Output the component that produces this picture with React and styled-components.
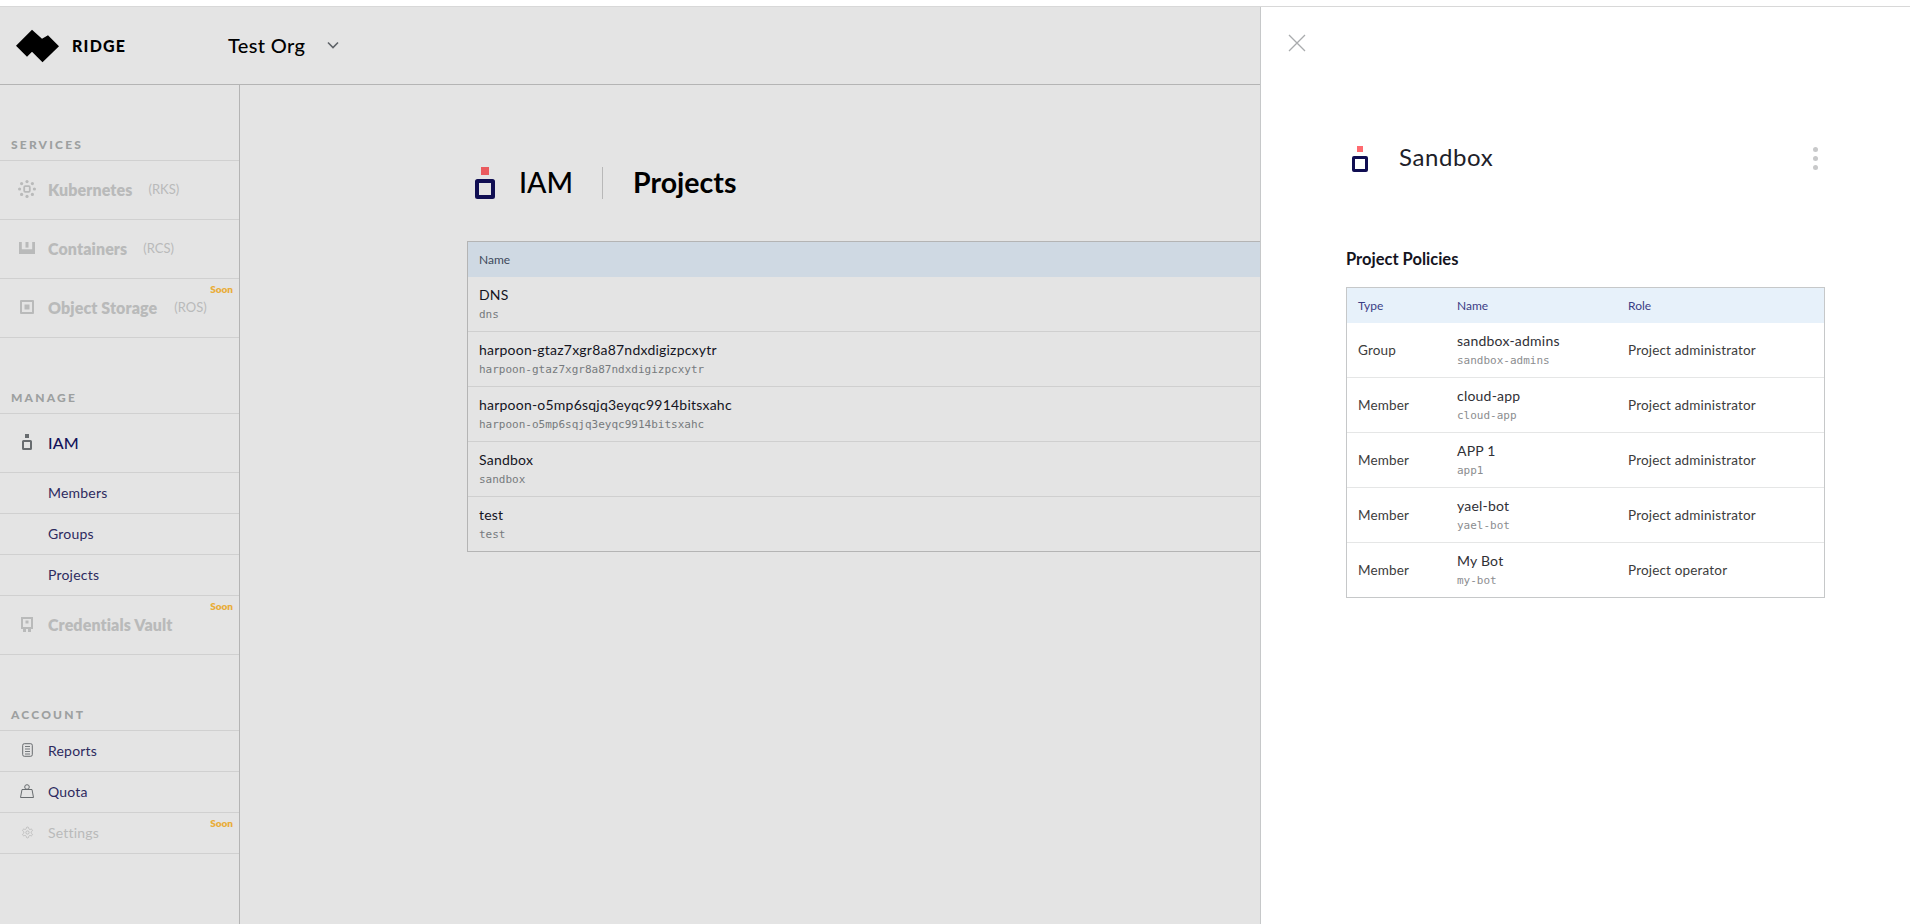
import React from "react";
import styled, { createGlobalStyle } from "styled-components";

const UI = `"Lato", "Noto Sans", sans-serif`;
const MONO = `"DejaVu Sans Mono", "Liberation Mono", monospace`;

const Global = createGlobalStyle`
  html, body { margin: 0; padding: 0; height: 100%; background: #fff; overflow: hidden; }
  #root { height: 100%; }
  * { box-sizing: border-box; }
`;

const Page = styled.div`
  position: relative;
  width: 1910px;
  height: 924px;
  padding-top: 6px;
  background: #fff;
  font-family: ${UI};
  overflow: hidden;
`;
const Shell = styled.div`
  height: 918px;
  display: flex;
  flex-direction: column;
  background: #e4e4e4;
  border-top: 1px solid #d8d8d8;
`;
const Header = styled.header`
  height: 78px;
  flex: none;
  display: flex;
  align-items: center;
  border-bottom: 1px solid #b4b4b4;
`;
const Brand = styled.div`
  width: 228px;
  flex: none;
  display: flex;
  align-items: center;
  gap: 12px;
  padding-left: 16px;
`;
const BrandName = styled.span`
  font-size: 16px;
  font-weight: 900;
  letter-spacing: 1.2px;
  color: #000;
`;
const OrgName = styled.span`
  font-size: 20px;
  font-weight: 500;
  color: #000;
  letter-spacing: 0.35px;
  margin-bottom: 2px;
`;
const Chevron = styled.svg`
  margin: 0 0 2px 22px;
  width: 12px;
  height: 8px;
`;
const Body = styled.div`
  flex: 1;
  display: flex;
  min-height: 0;
`;
const Side = styled.aside`
  width: 240px;
  flex: none;
  border-right: 1px solid #b4b4b4;
  padding-top: 52px;
`;
const Section = styled.section`
  margin-bottom: ${(p) => p.$after || 0}px;
`;
const SectionLabel = styled.div`
  height: 24px;
  padding-left: 11px;
  font-size: 12px;
  font-weight: 900;
  letter-spacing: 2.2px;
  line-height: 16px;
  color: #9da0a0;
  text-transform: uppercase;
  border-bottom: 1px solid #d0d0d0;
`;
const Row = styled.div`
  position: relative;
  height: ${(p) => (p.$big ? 59 : 41)}px;
  display: flex;
  align-items: center;
  padding-left: ${(p) => (p.$sub ? 48 : 0)}px;
  padding-bottom: 2px;
  border-bottom: 1px solid #d0d0d0;
  font-size: ${(p) => (p.$big ? 16 : 14)}px;
  letter-spacing: ${(p) => (p.$big ? 0.1 : 0.2)}px;
  font-weight: ${(p) => (p.$dim && p.$big ? 800 : p.$big ? 500 : 400)};
  color: ${(p) => (p.$dim ? "#b9baba" : p.$big ? "#12125a" : "#2d2a5e")};
`;
const RowIcon = styled.span`
  width: 48px;
  flex: none;
  display: flex;
  justify-content: center;
  padding-left: 6px;
`;
const Abbr = styled.span`
  margin-left: ${(p) => p.$gap}px;
  font-size: 13px;
  font-weight: 400;
  letter-spacing: 0;
  color: #b9baba;
`;
const Soon = styled.span`
  position: absolute;
  top: 3px;
  right: 6px;
  font-size: 10px;
  line-height: 14px;
  letter-spacing: 0;
  font-weight: 800;
  color: #e9ad3b;
`;
const Main = styled.main`
  flex: 1;
  padding: 82px 0 0 227px;
  min-width: 0;
`;
const Title = styled.div`
  height: 32px;
  display: flex;
  align-items: center;
  padding-left: 8px;
  margin-bottom: 42px;
`;
const TitleText = styled.h1`
  margin: 0 0 2px 24px;
  font-size: 28.5px;
  font-weight: ${(p) => p.$w};
  color: #000;
  line-height: 32px;
`;
const TitleRule = styled.span`
  width: 1px;
  height: 32px;
  background: #b8b8b8;
  margin: 0 6px 0 29px;
`;
const Table = styled.div`
  border: 1px solid ${(p) => (p.$light ? "#c6c8c9" : "#b4b4b4")};
  width: ${(p) => p.$w}px;
`;
const THead = styled.div`
  height: 35px;
  display: ${(p) => (p.$light ? "grid" : "flex")};
  grid-template-columns: 99px 171px 1fr;
  align-items: center;
  padding-left: 11px;
  padding-bottom: 1px;
  font-size: 12px;
  background: ${(p) => (p.$light ? "#e7f1fa" : "#cfd9e3")};
  color: ${(p) => (p.$light ? "#3b3d85" : "#3e4a5c")};
`;
const TRow = styled.div`
  height: 55px;
  display: ${(p) => (p.$cols ? "grid" : "flex")};
  grid-template-columns: 99px 171px 1fr;
  flex-direction: column;
  justify-content: center;
  align-items: ${(p) => (p.$cols ? "center" : "flex-start")};
  padding-left: 11px;
  padding-bottom: 1px;
  border-bottom: 1px solid ${(p) => (p.$light ? "#e5e6e6" : "#cfcfcf")};
  &:last-child { height: 54px; border-bottom: 0; }
`;
const Primary = styled.div`
  font-size: 14px;
  line-height: 20px;
  color: ${(p) => (p.$soft ? "#303036" : "#14141e")};
  letter-spacing: 0.22px;
  white-space: nowrap;
`;
const Slug = styled.div`
  font-family: ${MONO};
  font-size: 11px;
  line-height: 14px;
  margin-top: 3px;
  color: ${(p) => (p.$light ? "#8b8d8f" : "#767a7d")};
  white-space: nowrap;
`;
const Cell = styled.div`
  font-size: 13.5px;
  color: #3c3c3c;
  letter-spacing: 0.17px;
  white-space: nowrap;
`;
const Drawer = styled.aside`
  position: absolute;
  top: 7px;
  right: 0;
  bottom: 0;
  width: 650px;
  background: #fff;
  border-left: 1px solid #c6c8c9;
  padding: 0 85px 0 85px;
`;
const Close = styled.svg`
  position: absolute;
  left: 27px;
  top: 27px;
  width: 18px;
  height: 18px;
`;
const DrawerHead = styled.div`
  display: flex;
  align-items: center;
  height: 28px;
  margin-top: 138px;
  padding-left: 6px;
`;
const DrawerTitle = styled.h2`
  margin: 0 0 5px 31px;
  flex: 1;
  font-size: 24px;
  font-weight: 400;
  color: #202028;
  letter-spacing: 0.6px;
`;
const Dots = styled.div`
  display: flex;
  flex-direction: column;
  gap: 4px;
  margin: 0 7px 2px 0;
`;
const Dot = styled.span`
  width: 5px;
  height: 5px;
  border-radius: 50%;
  background: #c8c9ca;
`;
const PolicyTitle = styled.h3`
  margin: 75px 0 17px;
  padding: 0;
  font-size: 16.5px;
  line-height: 22px;
  font-weight: 700;
  color: #14141e;
`;

const Logo = () => (
  <svg width="44" height="34" viewBox="0 0 44 34">
    <path d="M0 16.8 16 .8 26 9.8 32 6.3 43 17.3 26.5 33.3 16 22.8 11 27.8Z" fill="#000" />
  </svg>
);
const IamIcon = ({ w, h, top = "#ea5a5e", box = "#100e52" }) => {
  const sq = Math.round(w * 0.4);
  const sw = Math.max(2, Math.round(w * 0.2));
  return (
    <svg width={w} height={h} viewBox={`0 0 ${w} ${h}`}>
      <rect x={(w - sq) / 2} y="0" width={sq} height={sq} fill={top} />
      <rect x={sw / 2} y={h - w + sw / 2} width={w - sw} height={w - sw} fill="none" stroke={box} strokeWidth={sw} rx="0.5" />
    </svg>
  );
};
const GRAY = "#b9baba";
const Icons = {
  kube: (
    <svg width="18" height="18" viewBox="0 0 18 18" fill={GRAY}>
      <rect x="6.2" y="6.2" width="5.6" height="5.6" fill="none" stroke={GRAY} strokeWidth="1.8" rx="1" />
      {[[9, 1.6], [9, 16.4], [1.6, 9], [16.4, 9], [3.6, 3.6], [14.4, 3.6], [3.6, 14.4], [14.4, 14.4]].map(([x, y], i) => (
        <circle key={i} cx={x} cy={y} r="1.6" />
      ))}
    </svg>
  ),
  box: (
    <svg width="16" height="12" viewBox="0 0 16 12" fill={GRAY}>
      <path d="M0 0h2.8v7.2h10.4V0H16v12H0Z" />
      <rect x="6.5" y="0" width="3" height="5.6" />
    </svg>
  ),
  store: (
    <svg width="14" height="14" viewBox="0 0 14 14">
      <rect width="14" height="14" rx="1" fill={GRAY} />
      <rect x="2" y="2" width="10" height="10" fill="#e4e4e4" />
      <rect x="4.5" y="4.5" width="5" height="5" fill={GRAY} />
    </svg>
  ),
  vault: (
    <svg width="12" height="15" viewBox="0 0 12 15" fill="none">
      <rect x="1" y="1" width="10" height="10" stroke={GRAY} strokeWidth="2" />
      <rect x="4.5" y="3.5" width="3" height="3" fill={GRAY} />
      <path d="M2 12h3v3H2ZM7 12h3v3H7Z" fill={GRAY} />
    </svg>
  ),
  report: (
    <svg width="11" height="14" viewBox="0 0 11 14" fill="none" stroke="#686c6f">
      <rect x="0.7" y="0.7" width="9.6" height="12.6" rx="1.6" strokeWidth="1" />
      <path d="M3 3.5h5M3 6h5M3 8.5h5M3 11h5" strokeWidth="0.9" />
    </svg>
  ),
  quota: (
    <svg width="14" height="14" viewBox="0 0 14 14" fill="none" stroke="#686c6f" strokeWidth="1">
      <circle cx="7" cy="3" r="2.3" />
      <path d="M2 5.5h10l1.5 8H.5Z" strokeLinejoin="round" />
    </svg>
  ),
  gear: (
    <svg width="13" height="13" viewBox="0 0 24 24" fill="none" stroke={GRAY} strokeWidth="1.6">
      <circle cx="12" cy="12" r="3" />
      <path d="M12.2 2h-.4a2 2 0 0 0-2 2v.2a2 2 0 0 1-1 1.7l-.4.3a2 2 0 0 1-2 0l-.2-.1a2 2 0 0 0-2.7.7l-.2.4a2 2 0 0 0 .7 2.7l.2.1a2 2 0 0 1 1 1.7v.5a2 2 0 0 1-1 1.7l-.2.1a2 2 0 0 0-.7 2.7l.2.4a2 2 0 0 0 2.7.7l.2-.1a2 2 0 0 1 2 0l.4.3a2 2 0 0 1 1 1.7v.2a2 2 0 0 0 2 2h.4a2 2 0 0 0 2-2v-.2a2 2 0 0 1 1-1.7l.4-.3a2 2 0 0 1 2 0l.2.1a2 2 0 0 0 2.7-.7l.2-.4a2 2 0 0 0-.7-2.7l-.2-.1a2 2 0 0 1-1-1.7v-.5a2 2 0 0 1 1-1.7l.2-.1a2 2 0 0 0 .7-2.7l-.2-.4a2 2 0 0 0-2.7-.7l-.2.1a2 2 0 0 1-2 0l-.4-.3a2 2 0 0 1-1-1.7V4a2 2 0 0 0-2-2Z" />
    </svg>
  ),
};

const projects = [
  ["DNS", "dns"],
  ["harpoon-gtaz7xgr8a87ndxdigizpcxytr", "harpoon-gtaz7xgr8a87ndxdigizpcxytr"],
  ["harpoon-o5mp6sqjq3eyqc9914bitsxahc", "harpoon-o5mp6sqjq3eyqc9914bitsxahc"],
  ["Sandbox", "sandbox"],
  ["test", "test"],
];
const policies = [
  ["Group", "sandbox-admins", "sandbox-admins", "Project administrator"],
  ["Member", "cloud-app", "cloud-app", "Project administrator"],
  ["Member", "APP 1", "app1", "Project administrator"],
  ["Member", "yael-bot", "yael-bot", "Project administrator"],
  ["Member", "My Bot", "my-bot", "Project operator"],
];

export default function App() {
  return (
    <Page>
      <Global />
      <Shell>
        <Header>
          <Brand>
            <Logo />
            <BrandName>RIDGE</BrandName>
          </Brand>
          <OrgName>Test Org</OrgName>
          <Chevron viewBox="0 0 12 8" fill="none" stroke="#5f6368" strokeWidth="1.6">
            <path d="M1 1.5 6 6.5 11 1.5" />
          </Chevron>
        </Header>
        <Body>
          <Side>
            <Section $after={52}>
              <SectionLabel>Services</SectionLabel>
              <Row $big $dim><RowIcon>{Icons.kube}</RowIcon>Kubernetes<Abbr $gap={16}>(RKS)</Abbr></Row>
              <Row $big $dim><RowIcon>{Icons.box}</RowIcon>Containers<Abbr $gap={16}>(RCS)</Abbr></Row>
              <Row $big $dim><RowIcon>{Icons.store}</RowIcon>Object Storage<Abbr $gap={17}>(ROS)</Abbr><Soon>Soon</Soon></Row>
            </Section>
            <Section $after={52}>
              <SectionLabel>Manage</SectionLabel>
              <Row $big><RowIcon><IamIcon w={10} h={16} top="#686c6f" box="#686c6f" /></RowIcon>IAM</Row>
              <Row $sub>Members</Row>
              <Row $sub>Groups</Row>
              <Row $sub>Projects</Row>
              <Row $big $dim><RowIcon>{Icons.vault}</RowIcon>Credentials Vault<Soon>Soon</Soon></Row>
            </Section>
            <Section>
              <SectionLabel>Account</SectionLabel>
              <Row><RowIcon>{Icons.report}</RowIcon>Reports</Row>
              <Row><RowIcon>{Icons.quota}</RowIcon>Quota</Row>
              <Row $dim><RowIcon>{Icons.gear}</RowIcon>Settings<Soon>Soon</Soon></Row>
            </Section>
          </Side>
          <Main>
            <Title>
              <IamIcon w={20} h={32} />
              <TitleText $w={500}>IAM</TitleText>
              <TitleRule />
              <TitleText $w={700}>Projects</TitleText>
            </Title>
            <Table $w={1000}>
              <THead>Name</THead>
              {projects.map(([a, b]) => (
                <TRow key={a}>
                  <Primary>{a}</Primary>
                  <Slug>{b}</Slug>
                </TRow>
              ))}
            </Table>
          </Main>
        </Body>
      </Shell>
      <Drawer>
        <Close viewBox="0 0 18 18" stroke="#a9abad" strokeWidth="1.3">
          <path d="M1 1 17 17M17 1 1 17" />
        </Close>
        <DrawerHead>
          <IamIcon w={16} h={26} top="#ff6b70" />
          <DrawerTitle>Sandbox</DrawerTitle>
          <Dots><Dot /><Dot /><Dot /></Dots>
        </DrawerHead>
        <PolicyTitle>Project Policies</PolicyTitle>
        <Table $light $w={479}>
          <THead $light><span>Type</span><span>Name</span><span>Role</span></THead>
          {policies.map(([t, n, s, r]) => (
            <TRow key={n} $cols $light>
              <Cell>{t}</Cell>
              <div>
                <Primary $soft>{n}</Primary>
                <Slug $light>{s}</Slug>
              </div>
              <Cell>{r}</Cell>
            </TRow>
          ))}
        </Table>
      </Drawer>
    </Page>
  );
}
